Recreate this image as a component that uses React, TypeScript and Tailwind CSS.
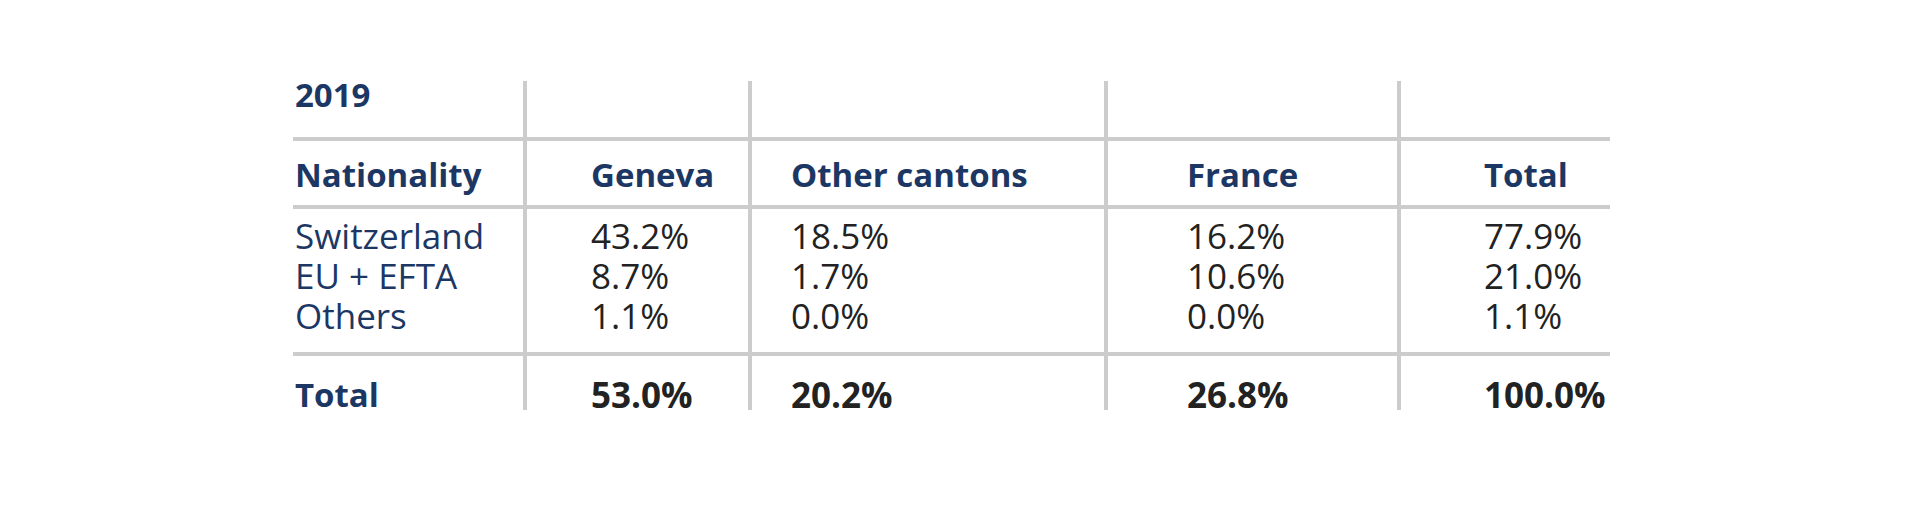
const navy = 'text-[#1c3764]';

const columns = [
  { key: 'geneva', label: 'Geneva', pad: 'pl-[64px]', width: 'w-[225px]' },
  { key: 'other', label: 'Other cantons', pad: 'pl-[39px]', width: 'w-[356px]' },
  { key: 'france', label: 'France', pad: 'pl-[79px]', width: 'w-[293px]' },
  { key: 'total', label: 'Total', pad: 'pl-[83px]', width: 'w-[213px]' },
];

const rows = [
  { label: 'Switzerland', values: ['43.2%', '18.5%', '16.2%', '77.9%'] },
  { label: 'EU + EFTA', values: ['8.7%', '1.7%', '10.6%', '21.0%'] },
  { label: 'Others', values: ['1.1%', '0.0%', '0.0%', '1.1%'] },
];

const totals = ['53.0%', '20.2%', '26.8%', '100.0%'];

function Rule() {
  return <div className="h-[4px] w-[1317px] bg-[#cccccc]" />;
}

function Band({ height, first, children }: { height: string; first: React.ReactNode; children: (col: typeof columns[number], i: number) => React.ReactNode }) {
  return (
    <div className={`flex ${height}`}>
      <div className="w-[230px] pl-[2px]">{first}</div>
      {columns.map((col, i) => (
        <div key={col.key} className={`${col.width} ${col.pad} border-l-4 border-[#cccccc]`}>
          {children(col, i)}
        </div>
      ))}
    </div>
  );
}

export default function App() {
  return (
    <div className="h-[515px] w-full bg-white font-['Open_Sans',sans-serif]">
      <div className="pl-[293px] pt-[81px]">
        {/* year */}
        <Band
          height="h-[56px]"
          first={<div className={`text-[33px] font-bold leading-[28px] ${navy}`}>2019</div>}
        >
          {() => null}
        </Band>
        <Rule />

        {/* column headers */}
        <Band
          height="h-[64px]"
          first={<div className={`pt-[14px] text-[33px] font-bold leading-[40px] ${navy}`}>Nationality</div>}
        >
          {(col) => (
            <div className={`pt-[14px] text-[33px] font-bold leading-[40px] ${navy}`}>{col.label}</div>
          )}
        </Band>
        <Rule />

        {/* body rows */}
        <Band
          height="h-[143px]"
          first={
            <div className={`pt-[7px] text-[35px] font-medium leading-[40px] ${navy}`}>
              {rows.map((r) => (
                <div key={r.label}>{r.label}</div>
              ))}
            </div>
          }
        >
          {(_, i) => (
            <div className="pt-[7px] text-[35px] leading-[40px] text-[#222222]">
              {rows.map((r) => (
                <div key={r.label}>{r.values[i]}</div>
              ))}
            </div>
          )}
        </Band>
        <Rule />

        {/* totals */}
        <Band
          height="h-[54px]"
          first={<div className={`pt-[19px] text-[33px] font-bold leading-[40px] ${navy}`}>Total</div>}
        >
          {(_, i) => (
            <div className="pt-[19px] text-[35px] font-bold leading-[40px] text-[#222222]">{totals[i]}</div>
          )}
        </Band>
      </div>
    </div>
  );
}
